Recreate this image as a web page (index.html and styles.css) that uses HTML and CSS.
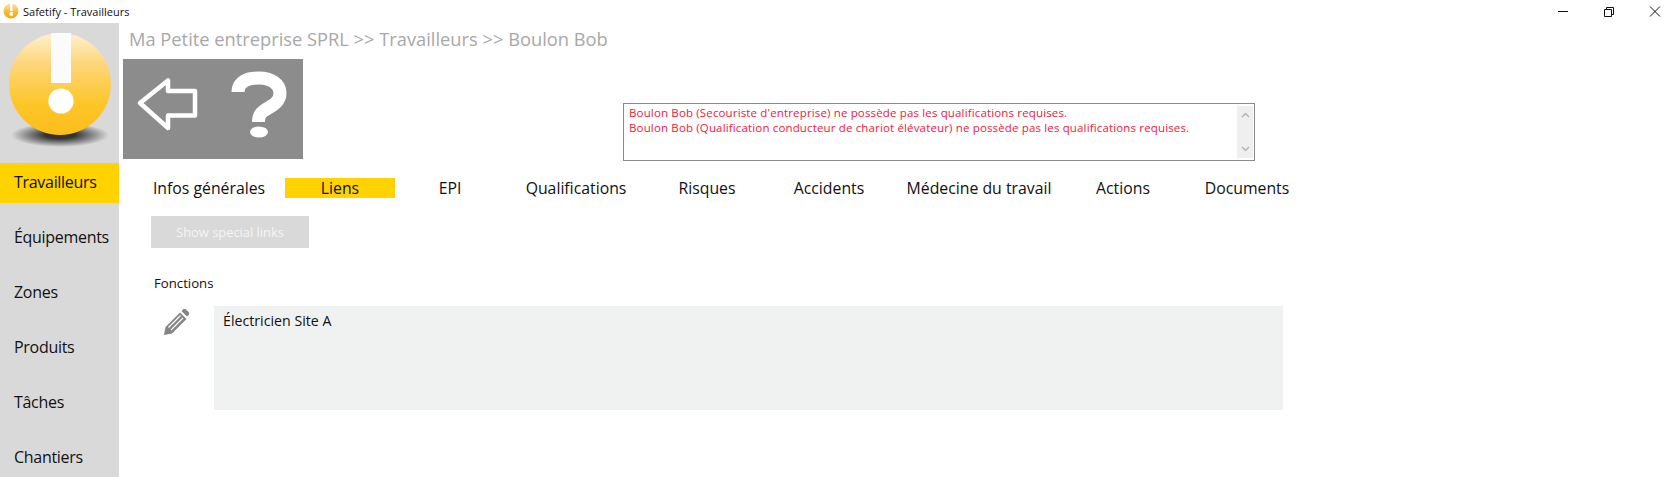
FILE: index.html
```html
<!DOCTYPE html>
<html lang="fr">
<head>
  <meta charset="UTF-8" />
  <title>Safetify - Travailleurs</title>
  <link rel="stylesheet" href="styles.css">
</head>
<body>
  <div class="titlebar">
    <svg class="app-icon" width="17" height="17" viewBox="0 0 17 17">
      <defs>
        <linearGradient id="appgrad" x1="0" y1="0" x2="0" y2="1">
          <stop offset="0" stop-color="#fde2a0"/>
          <stop offset="0.6" stop-color="#f9b92a"/>
          <stop offset="1" stop-color="#f4a810"/>
        </linearGradient>
      </defs>
      <circle cx="9" cy="8" r="7.5" fill="url(#appgrad)"/>
      <rect x="8" y="0" width="2.6" height="8" fill="#fff"/>
      <circle cx="9.3" cy="11" r="1.9" fill="#fff"/>
    </svg>
    <span class="app-title">Safetify - Travailleurs</span>
    <div class="win-controls">
      <svg width="46" height="22" viewBox="0 0 46 22"><path d="M18 10.5h10" stroke="#111" fill="none"/></svg>
      <svg width="46" height="22" viewBox="0 0 46 22"><path d="M18.5 8.5h7v7h-7zM20.5 8.5v-2h7v7h-2" stroke="#111" fill="none"/></svg>
      <svg width="46" height="22" viewBox="0 0 46 22"><path d="M18 5.5l10 10M28 5.5l-10 10" stroke="#111" fill="none"/></svg>
    </div>
  </div>

  <div class="app">
    <div class="sidebar">
      <div class="logo">
        <svg width="119" height="140" viewBox="0 0 119 140">
          <defs>
            <linearGradient id="ball" x1="0" y1="0" x2="0" y2="1">
              <stop offset="0" stop-color="#fff1d0"/>
              <stop offset="0.3" stop-color="#fed67a"/>
              <stop offset="0.7" stop-color="#fdc627"/>
              <stop offset="1" stop-color="#fbbd1c"/>
            </linearGradient>
            <radialGradient id="shade">
              <stop offset="0.3" stop-color="#333"/>
              <stop offset="1" stop-color="#d9d9d9"/>
            </radialGradient>
          </defs>
          <ellipse cx="60" cy="112" rx="49" ry="12" fill="url(#shade)"/>
          <circle cx="60" cy="61" r="51" fill="url(#ball)"/>
          <rect x="51" y="10" width="20" height="50" fill="#fbfbfb"/>
          <circle cx="61" cy="78" r="12.6" fill="#fff"/>
        </svg>
      </div>
      <ul class="nav">
        <li class="active">Travailleurs</li>
        <li>Équipements</li>
        <li>Zones</li>
        <li>Produits</li>
        <li>Tâches</li>
        <li>Chantiers</li>
      </ul>
    </div>

    <div class="main">
      <div class="crumbs">Ma Petite entreprise SPRL &gt;&gt; Travailleurs &gt;&gt; Boulon Bob</div>

      <div class="top-row">
        <div class="toolbar">
          <svg width="90" height="100" viewBox="0 0 90 100">
            <path d="M17 44L45 21.500V32H72V56.500H45V69Z" fill="none" stroke="#fff" stroke-width="4.500" stroke-linejoin="round"/>
          </svg>
          <svg width="90" height="100" viewBox="0 0 90 100">
            <path d="M25 33C25 22 35 19 46 19C58 19 67 25 67 34C67 44 58 47 52 51C47 54 45.500 57 45.500 63" fill="none" stroke="#fff" stroke-width="13"/>
            <ellipse cx="46" cy="73" rx="9" ry="5.500" fill="#fff"/>
          </svg>
        </div>
        <div class="messages">
          <div class="msg-text">
            <div>Boulon Bob (Secouriste d'entreprise) ne possède pas les qualifications requises.</div>
            <div>Boulon Bob (Qualification conducteur de chariot élévateur) ne possède pas les qualifications requises.</div>
          </div>
          <div class="msg-scroll">
            <svg width="9" height="6" viewBox="0 0 9 6"><path d="M1 5l3.500-3.500L8 5" fill="none" stroke="#b4b4b4" stroke-width="1.500"/></svg>
            <svg width="9" height="6" viewBox="0 0 9 6"><path d="M1 1l3.500 3.500L8 1" fill="none" stroke="#b4b4b4" stroke-width="1.500"/></svg>
          </div>
        </div>
      </div>

      <div class="tabs">
        <div class="tab">Infos générales</div>
        <div class="tab selected">Liens</div>
        <div class="tab">EPI</div>
        <div class="tab">Qualifications</div>
        <div class="tab">Risques</div>
        <div class="tab">Accidents</div>
        <div class="tab">Médecine du travail</div>
        <div class="tab">Actions</div>
        <div class="tab">Documents</div>
      </div>

      <div class="special-btn">Show special links</div>

      <div class="section-label">Fonctions</div>
      <div class="fonctions">
        <div class="edit-icon">
          <svg width="26" height="26" viewBox="0 0 26 26">
            <path d="M1 26l1.500-8L17 3.500l6.500 6.500L9 24.500zM18.500 2l2-2a1.500 1.500 0 0 1 2 0l3.500 3.500a1.500 1.500 0 0 1 0 2l-2 2z" fill="#858585"/>
            <path d="M5.500 18.500L17.500 6.500M8 21L20 9" stroke="#fff" stroke-width="1.200"/>
          </svg>
        </div>
        <div class="fonction-list">Électricien Site A</div>
      </div>
    </div>
  </div>
</body>
</html>
```

FILE: styles.css
```css
* { box-sizing: border-box; }
html, body { height: 100%; }
body {
  margin: 0;
  background: #fff;
  color: #111;
  font-family: "Open Sans", "Noto Sans", sans-serif;
  overflow: hidden;
}

.titlebar {
  display: flex;
  align-items: center;
  height: 23px;
  font-size: 11px;
}
.app-icon { margin-left: 2px; margin-right: 4px; }
.win-controls { display: flex; margin-left: auto; margin-right: 2px; }

.app { display: flex; height: 454px; }

.sidebar {
  width: 119px;
  flex: none;
  background: #d9d9d9;
}
.logo { height: 140px; }
.logo svg { display: block; }
.nav {
  list-style: none;
  margin: 0;
  padding: 0;
  display: flex;
  flex-direction: column;
  gap: 15px;
}
.nav li {
  height: 40px;
  line-height: 38px;
  padding-left: 14px;
  font-size: 16px;
  letter-spacing: -0.3px;
}
.nav li.active { background: #ffd200; }

.main { flex: 1; padding-left: 4px; }

.crumbs {
  height: 36px;
  padding: 2px 0 0 6px;
  font-size: 18.300px;
  line-height: 27px;
  color: #a8a8a8;
}

.top-row { display: flex; align-items: flex-start; }
.toolbar {
  display: flex;
  width: 180px;
  height: 100px;
  background: #8c8c8c;
}
.messages {
  display: flex;
  width: 632px;
  height: 58px;
  margin: 44px 0 0 320px;
  border: 1px solid #8a8a8a;
  padding: 1px 1px 2px;
}
.msg-text {
  flex: 1;
  padding: 0 4px;
  font-size: 11.500px;
  line-height: 15px;
  letter-spacing: 0.15px;
  color: #f5163c;
  white-space: nowrap;
}
.msg-scroll {
  width: 16px;
  margin-top: 1px;
  background: #efefef;
  display: flex;
  flex-direction: column;
  justify-content: space-between;
  align-items: center;
  padding: 6px 0;
}

.tabs {
  display: grid;
  grid-template-columns: 152px 110px 110px 142px 120px 124px 176px 112px 136px;
  width: max-content;
  margin: 17px 0 0 10px;
  font-size: 15.800px;
}
.tab { height: 20px; line-height: 21px; text-align: center; white-space: nowrap; }
.tab.selected { background: #ffd200; }

.special-btn {
  width: 158px;
  height: 32px;
  margin: 18px 0 0 28px;
  background: #d9d9d9;
  color: #f5f5f5;
  font-size: 12.900px;
  line-height: 33px;
  text-align: center;
}

.section-label {
  margin: 26px 0 0 31px;
  height: 18px;
  font-size: 13.200px;
  line-height: 18px;
}

.fonctions { display: flex; margin: 14px 0 0 40px; }
.edit-icon { width: 51px; padding-top: 3px; }
.edit-icon svg { display: block; }
.fonction-list {
  width: 1069px;
  height: 104px;
  padding: 5px 9px;
  background: #f0f1f1;
  font-size: 14.200px;
  line-height: 20px;
}
```
